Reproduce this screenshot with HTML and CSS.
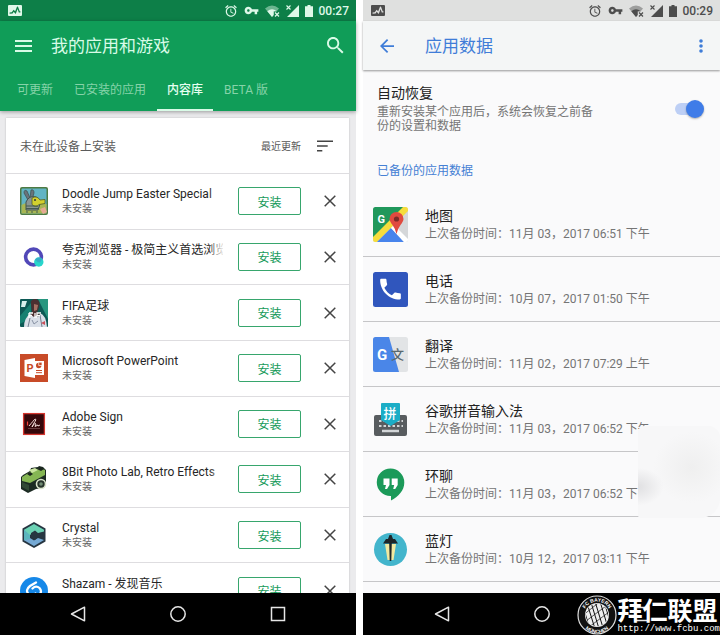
FILE: index.html
```html
<!DOCTYPE html>
<html lang="zh-CN">
<head>
<meta charset="utf-8">
<meta name="viewport" content="width=device-width, initial-scale=1">
<title>我的应用和游戏</title>
<link rel="stylesheet" href="styles.css">
</head>
<body>
<svg class="defs" aria-hidden="true">
  <symbol id="monitor" viewBox="0 0 14 11"><path fill-rule="evenodd" d="M1 0h12q1 0 1 1v9q0 1-1 1H1q-1 0-1-1V1q0-1 1-1zM1.600 8.800l3-.3 1.100-1.700 2 2.200 1.900-5 1.200 3.500h1.600V6.200h-.7L9.900 1.500 9 1.700 7.200 6.200 5.600 4.700 3.800 7.200l-2.200.2z"/></symbol>
  <symbol id="alarm" viewBox="0 0 24 24"><path d="M22 5.720l-4.600-3.860-1.290 1.530 4.600 3.860L22 5.720zM7.880 3.390L6.600 1.860 2 5.710l1.290 1.530 4.590-3.850zM12.500 8H11v6l4.750 2.850.75-1.230-4-2.370V8zM12 4c-4.970 0-9 4.030-9 9s4.020 9 9 9c4.970 0 9-4.030 9-9s-4.030-9-9-9zm0 16c-3.870 0-7-3.130-7-7s3.130-7 7-7 7 3.130 7 7-3.130 7-7 7z"/></symbol>
  <symbol id="key" viewBox="0 0 24 24"><path d="M12.650 10C11.830 7.670 9.610 6 7 6c-3.310 0-6 2.690-6 6s2.690 6 6 6c2.610 0 4.830-1.670 5.650-4H17v4h4v-4h2v-4H12.650zM7 14c-1.100 0-2-.9-2-2s.9-2 2-2 2 .9 2 2-.9 2-2 2z"/></symbol>
  <symbol id="wifi" viewBox="0 0 15 12"><path opacity=".45" d="M0 3.500Q7-2.500 14 3.500L11.500 6.500H8.500V10.200L7 12z"/><path d="M2.300 6.200Q7 2.300 11.700 6.200H8.700V9.900L7 12z"/><path d="M10 7.500l4 4M14 7.500l-4 4" stroke="currentColor" stroke-width="1.200"/></symbol>
  <symbol id="signal" viewBox="0 0 13 12"><path d="M13 0v12H1z"/><path d="M.5.500l4 4M4.500.500l-4 4" stroke="currentColor" stroke-width="1.100"/></symbol>
  <symbol id="battery" viewBox="0 0 8 12"><path d="M2.500 0h3v1.300H8V12H0V1.300h2.500z"/></symbol>
  <symbol id="close" viewBox="0 0 12 12"><path d="M.7.700l10.600 10.600M11.300.7L.7 11.300" fill="none" stroke="currentColor" stroke-width="1.500"/></symbol>
  <symbol id="nav-back" viewBox="0 0 16 16"><path d="M14.500 1.200v13.600L1.500 8z" fill="none" stroke="currentColor" stroke-width="1.500" stroke-linejoin="round"/></symbol>
  <symbol id="nav-home" viewBox="0 0 16 16"><circle cx="8" cy="8" r="7.200" fill="none" stroke="currentColor" stroke-width="1.500"/></symbol>
  <symbol id="nav-recent" viewBox="0 0 16 16"><rect x="1.500" y="1.500" width="13" height="13" fill="none" stroke="currentColor" stroke-width="1.500"/></symbol>
</svg>

<main class="screens">
  <section class="phone store">
    <div class="status">
      <svg class="s-monitor"><use href="#monitor"/></svg>
      <div class="status-icons">
        <svg class="s-alarm"><use href="#alarm"/></svg>
        <svg class="s-key"><use href="#key"/></svg>
        <svg class="s-wifi"><use href="#wifi"/></svg>
        <svg class="s-signal"><use href="#signal"/></svg>
        <svg class="s-battery"><use href="#battery"/></svg>
        <span class="clock">00:27</span>
      </div>
    </div>
    <header class="store-head">
      <div class="bar">
        <button class="icon-btn" aria-label="菜单"><svg class="i-menu" viewBox="0 0 17 12"><path d="M0 1h17M0 6h17M0 11h17" stroke="currentColor" stroke-width="2"/></svg></button>
        <h1>我的应用和游戏</h1>
        <button class="icon-btn" aria-label="搜索"><svg class="i-search" viewBox="3 3 18 18"><path d="M15.500 14h-.79l-.28-.27C15.410 12.590 16 11.110 16 9.500 16 5.910 13.090 3 9.500 3S3 5.910 3 9.500 5.910 16 9.500 16c1.610 0 3.090-.59 4.230-1.570l.27.28v.79l5 4.990L20.490 19l-4.990-5zm-6 0C7.010 14 5 11.990 5 9.500S7.010 5 9.500 5 14 7.010 14 9.500 11.990 14 9.500 14z"/></svg></button>
      </div>
      <nav class="tabs">
        <a href="#">可更新</a><a href="#">已安装的应用</a><a href="#" class="active" aria-current="page">内容库</a><a href="#">BETA 版</a>
      </nav>
    </header>
    <div class="store-body">
      <div class="card">
        <div class="card-head">
          <h2>未在此设备上安装</h2>
          <button class="sort">最近更新
            <svg class="i-sort" viewBox="0 0 16 12"><path d="M0 1.200h16M0 6h10.700M0 10.800h5.300" stroke="currentColor" stroke-width="1.600"/></svg>
          </button>
        </div>
        <ul class="apps">
          <li>
            <svg class="app-icon" viewBox="0 0 28 28"><rect width="28" height="28" rx="2" fill="#4d7a43"/><rect x="1.500" y="1.500" width="25" height="25" rx="1" fill="#62b4c4"/><path d="M1.500 18q8-5 25-1v9.500h-25z" fill="#a8b653"/><path d="M8 13L4 6q0-4 3-2l3 7 1-8q3-1 3 3l-2 7z" fill="#69747b" stroke="#3d4d4c" stroke-width=".7"/><path d="M6 23V15q3-7 10-5 4 2 4 7l-2 6z" fill="#8b9693" stroke="#425250"/><path d="M12 11q5-3 8 2l5-.5v4l-6 1q-3 4-7 0z" fill="#d3d02f" stroke="#545d22" stroke-width=".8"/><circle cx="15" cy="13" r="1" fill="#333"/><path d="M6 19h12M6 21.500h12M7 24v2M12 24v2M17 24v2" stroke="#435a51"/><path d="M20 22l5-2 2 5-4 2z" fill="#e6a994"/></svg>
            <div class="app-text"><h3>Doodle Jump Easter Special</h3><p>未安装</p></div>
            <button class="install">安装</button>
            <button class="icon-btn dismiss" aria-label="移除"><svg><use href="#close"/></svg></button>
          </li>
          <li>
            <svg class="app-icon" viewBox="0 0 28 28"><circle cx="13.500" cy="14" r="7.900" fill="none" stroke="#5148b8" stroke-width="3.600"/><circle cx="18.800" cy="19" r="4.700" fill="#28d5cb"/><path d="M15 16.500q4-4 7 0l-2 3q-3 0-5-3z" fill="#4187c2" opacity=".5"/></svg>
            <div class="app-text"><h3>夸克浏览器 - 极简主义首选浏览器</h3><p>未安装</p></div>
            <button class="install">安装</button>
            <button class="icon-btn dismiss" aria-label="移除"><svg><use href="#close"/></svg></button>
          </li>
          <li>
            <svg class="app-icon" viewBox="0 0 28 28"><rect width="28" height="28" rx="1" fill="#0d5955"/><path d="M18 0h10v20z" fill="#27967f"/><path d="M0 17L11 4v15L0 25z" fill="#168071"/><path d="M2 2h5L5 8H1z" fill="#d9f0ed"/><path d="M11 5q-1-5 5-5 5 2 3 8l-2 6 3 4H9l3-5z" fill="#4c3031"/><path d="M14 5l4 1-1 5-3 1z" fill="#a57163"/><path d="M4 28q0-9 6-13l4 3 6-4q6 2 7 14z" fill="#d9dfe8"/><path d="M8 28l2-9M20 16l2 12" stroke="#737f91"/><path d="M9 14h4M9 14v5M9 16.500h3M15 14v5M17 19v-5h4M17 16.500h3" stroke="#fff" stroke-width="1.300"/><path d="M21 24l4-2v4z" fill="#c9515b"/><path d="M12 21l2 4 4-3" fill="none" stroke="#8993a5"/></svg>
            <div class="app-text"><h3>FIFA足球</h3><p>未安装</p></div>
            <button class="install">安装</button>
            <button class="icon-btn dismiss" aria-label="移除"><svg><use href="#close"/></svg></button>
          </li>
          <li>
            <svg class="app-icon" viewBox="0 0 28 28"><rect width="28" height="28" fill="#c84b28"/><path d="M14 7h10v14H14z" fill="#fff"/><path d="M4.500 6L15 4v20L4.500 22z" fill="#fff"/><text x="6.500" y="18" class="mark-p">P</text><circle cx="18.700" cy="11.500" r="2.700" fill="#c84b28"/><path d="M18.700 11.500V8.200h3.300v3.300z" fill="#c84b28" stroke="#fff" stroke-width=".7"/><path d="M16 16.500h6M16 18.700h6" stroke="#c84b28"/></svg>
            <div class="app-text"><h3>Microsoft PowerPoint</h3><p>未安装</p></div>
            <button class="install">安装</button>
            <button class="icon-btn dismiss" aria-label="移除"><svg><use href="#close"/></svg></button>
          </li>
          <li>
            <svg class="app-icon" viewBox="0 0 28 28"><rect x="3.600" y="3.600" width="20.800" height="20.800" fill="#35080b" stroke="#d5362f" stroke-width="1.300"/><path d="M9 16q5-6 6-7 2 0-1 4l-2 4q3-5 4-3l-1 2.500 3-1.500v1l2-1" fill="none" stroke="#f2dcd9"/><path d="M7.500 11.500v4" stroke="#ef403a" stroke-width="1.200"/><path d="M8 18.500h12" stroke="#8c6264" stroke-width=".6"/></svg>
            <div class="app-text"><h3>Adobe Sign</h3><p>未安装</p></div>
            <button class="install">安装</button>
            <button class="icon-btn dismiss" aria-label="移除"><svg><use href="#close"/></svg></button>
          </li>
          <li>
            <svg class="app-icon" viewBox="0 0 28 28"><path d="M1 12l2-2 7-4 1-3 7-1 1-1 4 1 3 3v13l-4 5-6 1-8 4-7-4z" fill="#1c2b23"/><path d="M2 12l8-5 10-4 5 2v5l-15 8-8-2z" fill="#85b653"/><path d="M9 5l6-2 3 2-6 3z" fill="#cce6a2"/><path d="M7 9l3-2 3 2-3 2zM17 4l4-2 3 2-3 2z" fill="#1a251e"/><circle cx="21" cy="19" r="4.500" fill="#27332b" stroke="#d9e3ca" stroke-width="1.600"/><circle cx="21" cy="19" r="1.800" fill="#718c74"/><path d="M2 17l7 3v6l-7-4z" fill="#314935"/></svg>
            <div class="app-text"><h3>8Bit Photo Lab, Retro Effects</h3><p>未安装</p></div>
            <button class="install">安装</button>
            <button class="icon-btn dismiss" aria-label="移除"><svg><use href="#close"/></svg></button>
          </li>
          <li>
            <svg class="app-icon" viewBox="0 0 28 28"><path d="M14 1l11.500 6.500v13L14 27 2.500 20.500v-13z" fill="#263541"/><path d="M14 3l10 5.700v3l-6 2-4-2.700-4 3H4V8.700z" fill="#6bd2b4"/><path d="M4 14h6v3l4 2.500 4-2.500 6 2-10 6-10-5.700z" fill="#75a9d4"/><path d="M4 8.700L10 14v4l-6 1.300z" fill="#5bb6be"/><path d="M11 12l4-2.500 3 2.500 6-1.500v7L18 16l-3 3-4-2.500z" fill="#273641"/></svg>
            <div class="app-text"><h3>Crystal</h3><p>未安装</p></div>
            <button class="install">安装</button>
            <button class="icon-btn dismiss" aria-label="移除"><svg><use href="#close"/></svg></button>
          </li>
          <li>
            <svg class="app-icon" viewBox="0 0 28 28"><circle cx="14" cy="14" r="14" fill="#1688e8"/><path d="M16 5.500l-6 3.500q-5 4-1.500 8 3.500 3 7-.5M12 22.500l6-3.500q5-4 1.500-8-3.500-3-7 .5" fill="none" stroke="#fff" stroke-width="2.300" stroke-linecap="round"/></svg>
            <div class="app-text"><h3>Shazam - 发现音乐</h3><p>未安装</p></div>
            <button class="install">安装</button>
            <button class="icon-btn dismiss" aria-label="移除"><svg><use href="#close"/></svg></button>
          </li>
        </ul>
      </div>
    </div>
    <nav class="sysnav">
      <button class="icon-btn" aria-label="返回"><svg><use href="#nav-back"/></svg></button>
      <button class="icon-btn" aria-label="主屏幕"><svg><use href="#nav-home"/></svg></button>
      <button class="icon-btn" aria-label="最近任务"><svg><use href="#nav-recent"/></svg></button>
    </nav>
  </section>

  <section class="phone settings">
    <div class="status">
      <svg class="s-monitor"><use href="#monitor"/></svg>
      <div class="status-icons">
        <svg class="s-alarm"><use href="#alarm"/></svg>
        <svg class="s-key"><use href="#key"/></svg>
        <svg class="s-wifi"><use href="#wifi"/></svg>
        <svg class="s-signal"><use href="#signal"/></svg>
        <svg class="s-battery"><use href="#battery"/></svg>
        <span class="clock">00:29</span>
      </div>
    </div>
    <header class="bar settings-head">
      <button class="icon-btn" aria-label="返回"><svg class="i-arrow" viewBox="4 4 16 16"><path d="M20 11H7.830l5.590-5.590L12 4l-8 8 8 8 1.410-1.410L7.830 13H20v-2z"/></svg></button>
      <h1>应用数据</h1>
      <button class="icon-btn" aria-label="更多"><svg class="i-more" viewBox="0 0 4 14"><circle cx="2" cy="2" r="1.800"/><circle cx="2" cy="7" r="1.800"/><circle cx="2" cy="12" r="1.800"/></svg></button>
    </header>
    <div class="settings-body">
      <div class="restore">
        <label for="auto"><strong>自动恢复</strong><span>重新安装某个应用后，系统会恢复之前备份的设置和数据</span></label>
        <input id="auto" class="switch" type="checkbox" role="switch" checked>
      </div>
      <h2>已备份的应用数据</h2>
      <ul class="backups">
        <li>
          <svg class="data-icon" viewBox="0 0 35 35"><clipPath id="mc"><rect width="35" height="35" rx="2.500"/></clipPath><g clip-path="url(#mc)"><rect width="35" height="35" fill="#d5d7d9"/><path d="M0 0h33L0 33z" fill="#20985b"/><path d="M30 0h5v4L4 35H0v-5z" fill="#f6dd3d"/><path d="M4 35l14-14 13 14z" fill="#4884ec"/><path d="M18 21l3-3 14 14v3h-4z" fill="#fff"/></g><text x="4.500" y="16" class="mark-g">G</text><path d="M23.500 27q-1-5-4-9-3-4-3-6a7 7 0 0 1 14 0q0 2-3 6-3 4-4 9z" fill="#e04a3f"/><circle cx="23.500" cy="12" r="2.600" fill="#7b2b28"/></svg>
          <div><h3>地图</h3><p>上次备份时间：11月 03，2017 06:51 下午</p></div>
        </li>
        <li>
          <svg class="data-icon" viewBox="0 0 35 35"><rect width="35" height="35" rx="2.500" fill="#3056bd"/><path transform="translate(3.700 3.300) scale(1.150)" fill="#fff" d="M6.620 10.790c1.440 2.830 3.760 5.140 6.590 6.590l2.200-2.200c.27-.27.67-.36 1.020-.24 1.120.37 2.330.57 3.570.57.55 0 1 .45 1 1V20c0 .55-.45 1-1 1-9.390 0-17-7.610-17-17 0-.55.45-1 1-1h3.500c.55 0 1 .45 1 1 0 1.250.2 2.450.57 3.570.11.35.03.74-.25 1.020l-2.200 2.200z"/></svg>
          <div><h3>电话</h3><p>上次备份时间：10月 07，2017 01:50 下午</p></div>
        </li>
        <li>
          <svg class="data-icon" viewBox="0 0 35 35"><rect width="35" height="35" rx="2.500" fill="#e2e4e6"/><path d="M2.500 0H16l10 35H2.500Q0 35 0 32.500v-30Q0 0 2.500 0z" fill="#4a86e8"/><text x="4" y="22.500" class="mark-g big">G</text><text x="18" y="22" class="mark-cn dark">文</text></svg>
          <div><h3>翻译</h3><p>上次备份时间：11月 02，2017 07:29 上午</p></div>
        </li>
        <li>
          <svg class="data-icon" viewBox="0 0 35 35"><rect x="1" y="13" width="33" height="21" rx="2" fill="#585c5f"/><path d="M6 19h24M6 24h24" stroke="#d3d6d8" stroke-width="2.200" stroke-dasharray="2.500 2"/><path d="M9 29h17" stroke="#d3d6d8" stroke-width="2.500"/><path d="M8 2q0-1 1-1h17q1 0 1 1v16l-9.500 6L8 18z" fill="#1badc6"/><text x="10.500" y="16" class="mark-cn">拼</text></svg>
          <div><h3>谷歌拼音输入法</h3><p>上次备份时间：11月 03，2017 06:52 下午</p></div>
        </li>
        <li>
          <svg class="data-icon" viewBox="0 0 35 35"><path d="M17.500 1.500a14 14 0 0 1 13.800 14c0 8-6 14-13.300 18v-4.500h-.5a13.700 13.700 0 0 1 0-27.500z" fill="#1b9a59"/><path d="M10.500 11.500h6V18l-2.500 4h-2l1-4h-2.500zM18.700 11.500h6V18l-2.500 4h-2l1-4h-2.500z" fill="#fff"/></svg>
          <div><h3>环聊</h3><p>上次备份时间：11月 03，2017 06:52 下午</p></div>
        </li>
        <li>
          <svg class="data-icon" viewBox="0 0 35 35"><circle cx="17.500" cy="17.500" r="16.500" fill="#43b5cc"/><path d="M12 12h11l-2.500 16h-6z" fill="#f1e9a0"/><path d="M10 11.500l3-4.500h2l1.500-4h2L20 7h2l3 4.500zM16.200 11h2.600l-.5 18h-1.600z" fill="#1d2629"/></svg>
          <div><h3>蓝灯</h3><p>上次备份时间：10月 12，2017 03:11 下午</p></div>
        </li>
      </ul>
      <div class="smudge"></div>
    </div>
    <nav class="sysnav">
      <button class="icon-btn" aria-label="返回"><svg><use href="#nav-back"/></svg></button>
      <button class="icon-btn" aria-label="主屏幕"><svg><use href="#nav-home"/></svg></button>
      <button class="icon-btn" aria-label="最近任务"><svg><use href="#nav-recent"/></svg></button>
    </nav>
    <aside class="watermark">
      <svg class="crest" viewBox="0 0 40 40">
        <circle cx="20" cy="20" r="19" fill="#111" stroke="#ddd" stroke-width="1.200"/>
        <circle cx="20" cy="20" r="12" fill="#eee"/>
        <clipPath id="cc"><circle cx="20" cy="20" r="11.300"/></clipPath>
        <g clip-path="url(#cc)" stroke="#111" stroke-width="1"><path d="M5 8l9 30M9 5l10 32M13 4l10 33M17 3l10 33M22 3l10 33M26 3l9 30M4 16l7 20"/><path d="M5 21L25 5M5 29L33 8M8 35L36 14M17 37l19-14" stroke-width=".7"/></g>
        <path id="arc-top" d="M6.800 21.500a13.300 13.300 0 1 1 26.400 0" fill="none"/>
        <path id="arc-bottom" d="M2.700 21a17.300 17.300 0 0 0 34.600 0" fill="none"/>
        <text class="crest-text"><textPath href="#arc-top" startOffset="50%">FC BAYERN</textPath></text>
        <text class="crest-text"><textPath href="#arc-bottom" startOffset="50%">MÜNCHEN</textPath></text>
      </svg>
      <div class="site"><b>拜仁联盟</b><span>http://www.fcbu.com</span></div>
    </aside>
  </section>
</main>
</body>
</html>
```
FILE: styles.css
```css
* { box-sizing: border-box; }
body {
  margin: 0;
  background: #fff;
  font-family: Roboto, "Noto Sans CJK SC", sans-serif;
  font-size: 12px;
}
h1, h2, h3, p, ul { margin: 0; padding: 0; font-weight: 400; }
ul { list-style: none; }
svg { display: block; fill: currentColor; flex: none; }
a { color: inherit; text-decoration: none; }
button { font: inherit; color: inherit; background: none; border: 0; padding: 0; cursor: pointer; }
.defs { position: absolute; width: 0; height: 0; }
.screens {
  display: grid;
  grid-template-columns: 356fr 357fr;
  grid-template-rows: minmax(0, 1fr);
  gap: 7px;
  height: 100vh;
}
.phone { position: relative; display: flex; flex-direction: column; min-width: 0; min-height: 0; }

/* Status bar */
.status {
  display: flex;
  flex: none;
  align-items: center;
  justify-content: space-between;
  height: 21px;
  padding: 0 7px 0 8px;
}
.status-icons { display: flex; align-items: center; gap: 6px; }
.s-monitor { width: 14px; height: 11px; }
.s-alarm { width: 14px; height: 14px; }
.s-key { width: 15px; height: 15px; }
.s-wifi { width: 15px; height: 12px; }
.s-signal { width: 13px; height: 12px; }
.s-battery { width: 8px; height: 12px; }
.clock { font-size: 12px; font-weight: 500; }

/* Toolbars */
.bar { display: flex; align-items: center; height: 49px; }
.bar h1 { flex: 1; font-size: 17px; line-height: 24px; }
.icon-btn { display: flex; flex: none; }

/* Store */
.store .status { background: #0d7f48; color: #dff8e9; }
.store-head { position: relative; z-index: 1; flex: none; background: #109d58; color: #d9fbe7; box-shadow: 0 1px 4px rgba(0, 0, 0, .35); }
.store-head .bar { padding: 0 12px 0 15px; }
.store-head h1 { margin-left: 19px; }
.i-menu { width: 17px; height: 12px; }
.i-search { width: 17px; height: 17px; }
.tabs { display: flex; gap: 1px; height: 41px; padding-left: 7px; color: #86d3a9; }
.tabs a { padding: 0 10px; line-height: 40px; border-bottom: 2px solid transparent; }
.tabs .active { color: #e5fff0; border-color: #d9fbe7; font-weight: 500; }
.store-body { flex: 1; min-height: 0; overflow: hidden; padding: 7px 7px 0 6px; background: #ebebed; }
.card { background: #fff; box-shadow: 0 0 2px rgba(0, 0, 0, .2); }
.card-head { display: flex; align-items: center; justify-content: space-between; height: 55px; padding: 0 16px 0 14px; }
.card-head h2 { font-size: 12px; color: #5b5b5b; }
.sort { display: flex; align-items: center; gap: 16px; font-size: 10px; color: #555; }
.i-sort { width: 16px; height: 12px; color: #444; }
.apps { display: grid; grid-template-columns: minmax(0, 1fr); grid-auto-rows: 1fr; min-height: 445px; }
.apps li { display: flex; align-items: center; padding: 0 13px 0 14px; border-top: 1px solid #dedde0; }
.app-icon { width: 28px; height: 28px; }
.app-text { position: relative; flex: 1; min-width: 0; margin: 0 15px 0 14px; padding-top: 1px; }
.app-text h3 {
  overflow: hidden;
  font-size: 12px;
  line-height: 15px;
  white-space: nowrap;
  color: #262626;
}
.app-text::after {
  content: "";
  position: absolute;
  inset: 0 0 0 auto;
  width: 14px;
  background: linear-gradient(to right, rgba(255, 255, 255, 0), rgba(255, 255, 255, .9));
}
.app-text p { font-size: 10px; line-height: 14px; color: #666; }
.install { flex: none; width: 63px; height: 28px; border: 1px solid #37a66d; border-radius: 2px; color: #159a59; font-size: 12px; }
.dismiss { margin-left: 23px; color: #444; }
.dismiss svg { width: 12px; height: 12px; }
.mark-p { font: 700 11px Roboto, sans-serif; fill: #c84b28; }

/* Settings */
.settings { background: #fafafb; }
.settings .status { background: #dfe0df; color: #4d4d4d; }
.settings-head { flex: none; padding: 0 17px; color: #3f7dd8; background: #f4f6f6; box-shadow: 0 1px 2px rgba(0, 0, 0, .4); z-index: 1; }
.settings-head h1 { margin-left: 31px; }
.i-arrow { width: 14px; height: 14px; }
.i-more { width: 4px; height: 14px; }
.settings-body { position: relative; flex: 1; min-height: 0; overflow: hidden; }
.restore { display: flex; align-items: center; justify-content: space-between; height: 78px; padding: 0 16px 0 14px; }
.restore label { display: block; max-width: 222px; }
.restore strong, .restore span { display: block; }
.restore strong { margin-bottom: 4px; font-size: 14px; line-height: 16px; font-weight: 400; color: #222; }
.restore span { font-size: 12px; line-height: 14px; color: #757575; }
.switch { appearance: none; position: relative; width: 29px; height: 18px; margin: 0; cursor: pointer; }
.switch::before { content: ""; position: absolute; inset: 3px 2px 3px 0; border-radius: 6px; background: #bdcff5; }
.switch::after { content: ""; position: absolute; top: 0; left: 0; width: 18px; height: 18px; border-radius: 50%; background: #fff; box-shadow: 0 1px 2px rgba(0, 0, 0, .3); }
.switch:checked::after { left: 11px; background: #3f7ce8; }
.settings-body h2 { padding: 14px 14px 12px; font-size: 12px; line-height: 18px; color: #4580d4; }
.backups li { display: flex; align-items: center; gap: 17px; height: 65px; padding-left: 10px; border-bottom: 1px solid #c6c6c8; }
.backups li div { padding-top: 2px; }
.data-icon { width: 35px; height: 35px; }
.backups h3 { font-size: 14px; line-height: 18px; color: #222; }
.backups p { font-size: 12px; line-height: 18px; color: #757575; white-space: nowrap; }
.mark-g { font: 700 11px Roboto, sans-serif; fill: #fff; }
.mark-g.big { font-size: 15px; }
.mark-cn { font: 500 13px "Noto Sans CJK SC", sans-serif; fill: #fff; }
.mark-cn.dark { fill: #596970; }
.smudge {
  position: absolute;
  right: 0;
  bottom: 75px;
  width: 82px;
  height: 92px;
  border-radius: 6px 12px 20px 3px;
  background:
    radial-gradient(ellipse at 0 66%, #e0e0e2, transparent 22%),
    radial-gradient(ellipse at 65% 45%, #efefef, transparent 50%),
    #f7f7f8;
}

/* System navigation */
.sysnav { display: flex; flex: none; align-items: center; justify-content: center; gap: 84px; height: 42px; background: #000; color: #e6e6e6; }
.sysnav svg { width: 16px; height: 16px; }

/* Watermark laid over the screen */
.watermark { position: absolute; right: 0; bottom: 0; display: flex; align-items: center; color: #fff; }
.crest { width: 40px; height: 40px; }
.crest-text { font: 700 5px "Liberation Sans", sans-serif; fill: #fff; text-anchor: middle; }
.site { display: flex; flex-direction: column; }
.site b { font: 700 25px/28px "Noto Sans CJK SC", sans-serif; }
.site span { font: 9px/12px "Liberation Mono", monospace; }
```
